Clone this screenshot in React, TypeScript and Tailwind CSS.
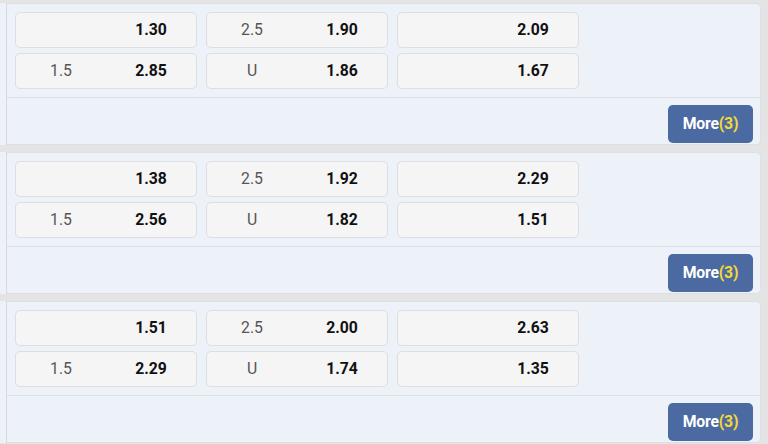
import React from 'react'

interface Cell {
  label?: string;
  odds: string;
}

interface Match {
  top: Cell[];
  bottom: Cell[];
  more: number;
}

const matches: Match[] = [
  {
    top: [{ odds: '1.30' }, { label: '2.5', odds: '1.90' }, { odds: '2.09' }],
    bottom: [{ label: '1.5', odds: '2.85' }, { label: 'U', odds: '1.86' }, { odds: '1.67' }],
    more: 3
  },
  {
    top: [{ odds: '1.38' }, { label: '2.5', odds: '1.92' }, { odds: '2.29' }],
    bottom: [{ label: '1.5', odds: '2.56' }, { label: 'U', odds: '1.82' }, { odds: '1.51' }],
    more: 3
  },
  {
    top: [{ odds: '1.51' }, { label: '2.5', odds: '2.00' }, { odds: '2.63' }],
    bottom: [{ label: '1.5', odds: '2.29' }, { label: 'U', odds: '1.74' }, { odds: '1.35' }],
    more: 3
  }
]

const OddsCell = ({ label, odds }: Cell) => {
  return (
    <div className="w-[182px] h-[36px] flex items-center rounded-[5px] border border-[#dcdee3] bg-[#f5f5f6] text-[15.75px]">
      <div className="flex-1 text-center text-[#555]">{label}</div>
      <div className="flex-1 text-center font-bold text-[#111]">{odds}</div>
    </div>
  )
}

const MatchPanel = ({ match }: { match: Match }) => {
  return (
    <div className="flex h-[142px] mr-[7px]">
      <div className="w-[7px] bg-[#eef1f8] border-r border-[#d6d9df]"></div>
      <div className="flex-1 flex flex-col bg-[#edf1f8] border border-l-0 border-[#dcdfe5] rounded-r-[5px]">
        <div className="px-[8px] py-[8px] flex flex-col gap-[5px] border-b border-[#dcdfe5]">
          <div className="flex gap-[9px]">
            {match.top.map((c, i) => (
              <OddsCell key={i} {...c} />
            ))}
          </div>
          <div className="flex gap-[9px]">
            {match.bottom.map((c, i) => (
              <OddsCell key={i} {...c} />
            ))}
          </div>
        </div>
        <div className="flex-1 flex justify-end items-start pt-[7px] pr-[7px]">
          <button className="w-[85px] h-[38px] rounded-[5px] bg-[#4b6aa1] text-white font-bold text-[15.75px] tracking-[-0.2px]">
            More<span className="text-[#f5d835]">({match.more})</span>
          </button>
        </div>
      </div>
    </div>
  )
}

export default function App() {
  return (
    <div
      className="w-[768px] h-[444px] overflow-hidden bg-[#e4e4e4] pt-[3px] flex flex-col gap-[7px]"
      style={{ fontFamily: 'Roboto, "Liberation Sans", Arial, sans-serif' }}
    >
      {matches.map((m, i) => (
        <MatchPanel key={i} match={m} />
      ))}
    </div>
  )
}
